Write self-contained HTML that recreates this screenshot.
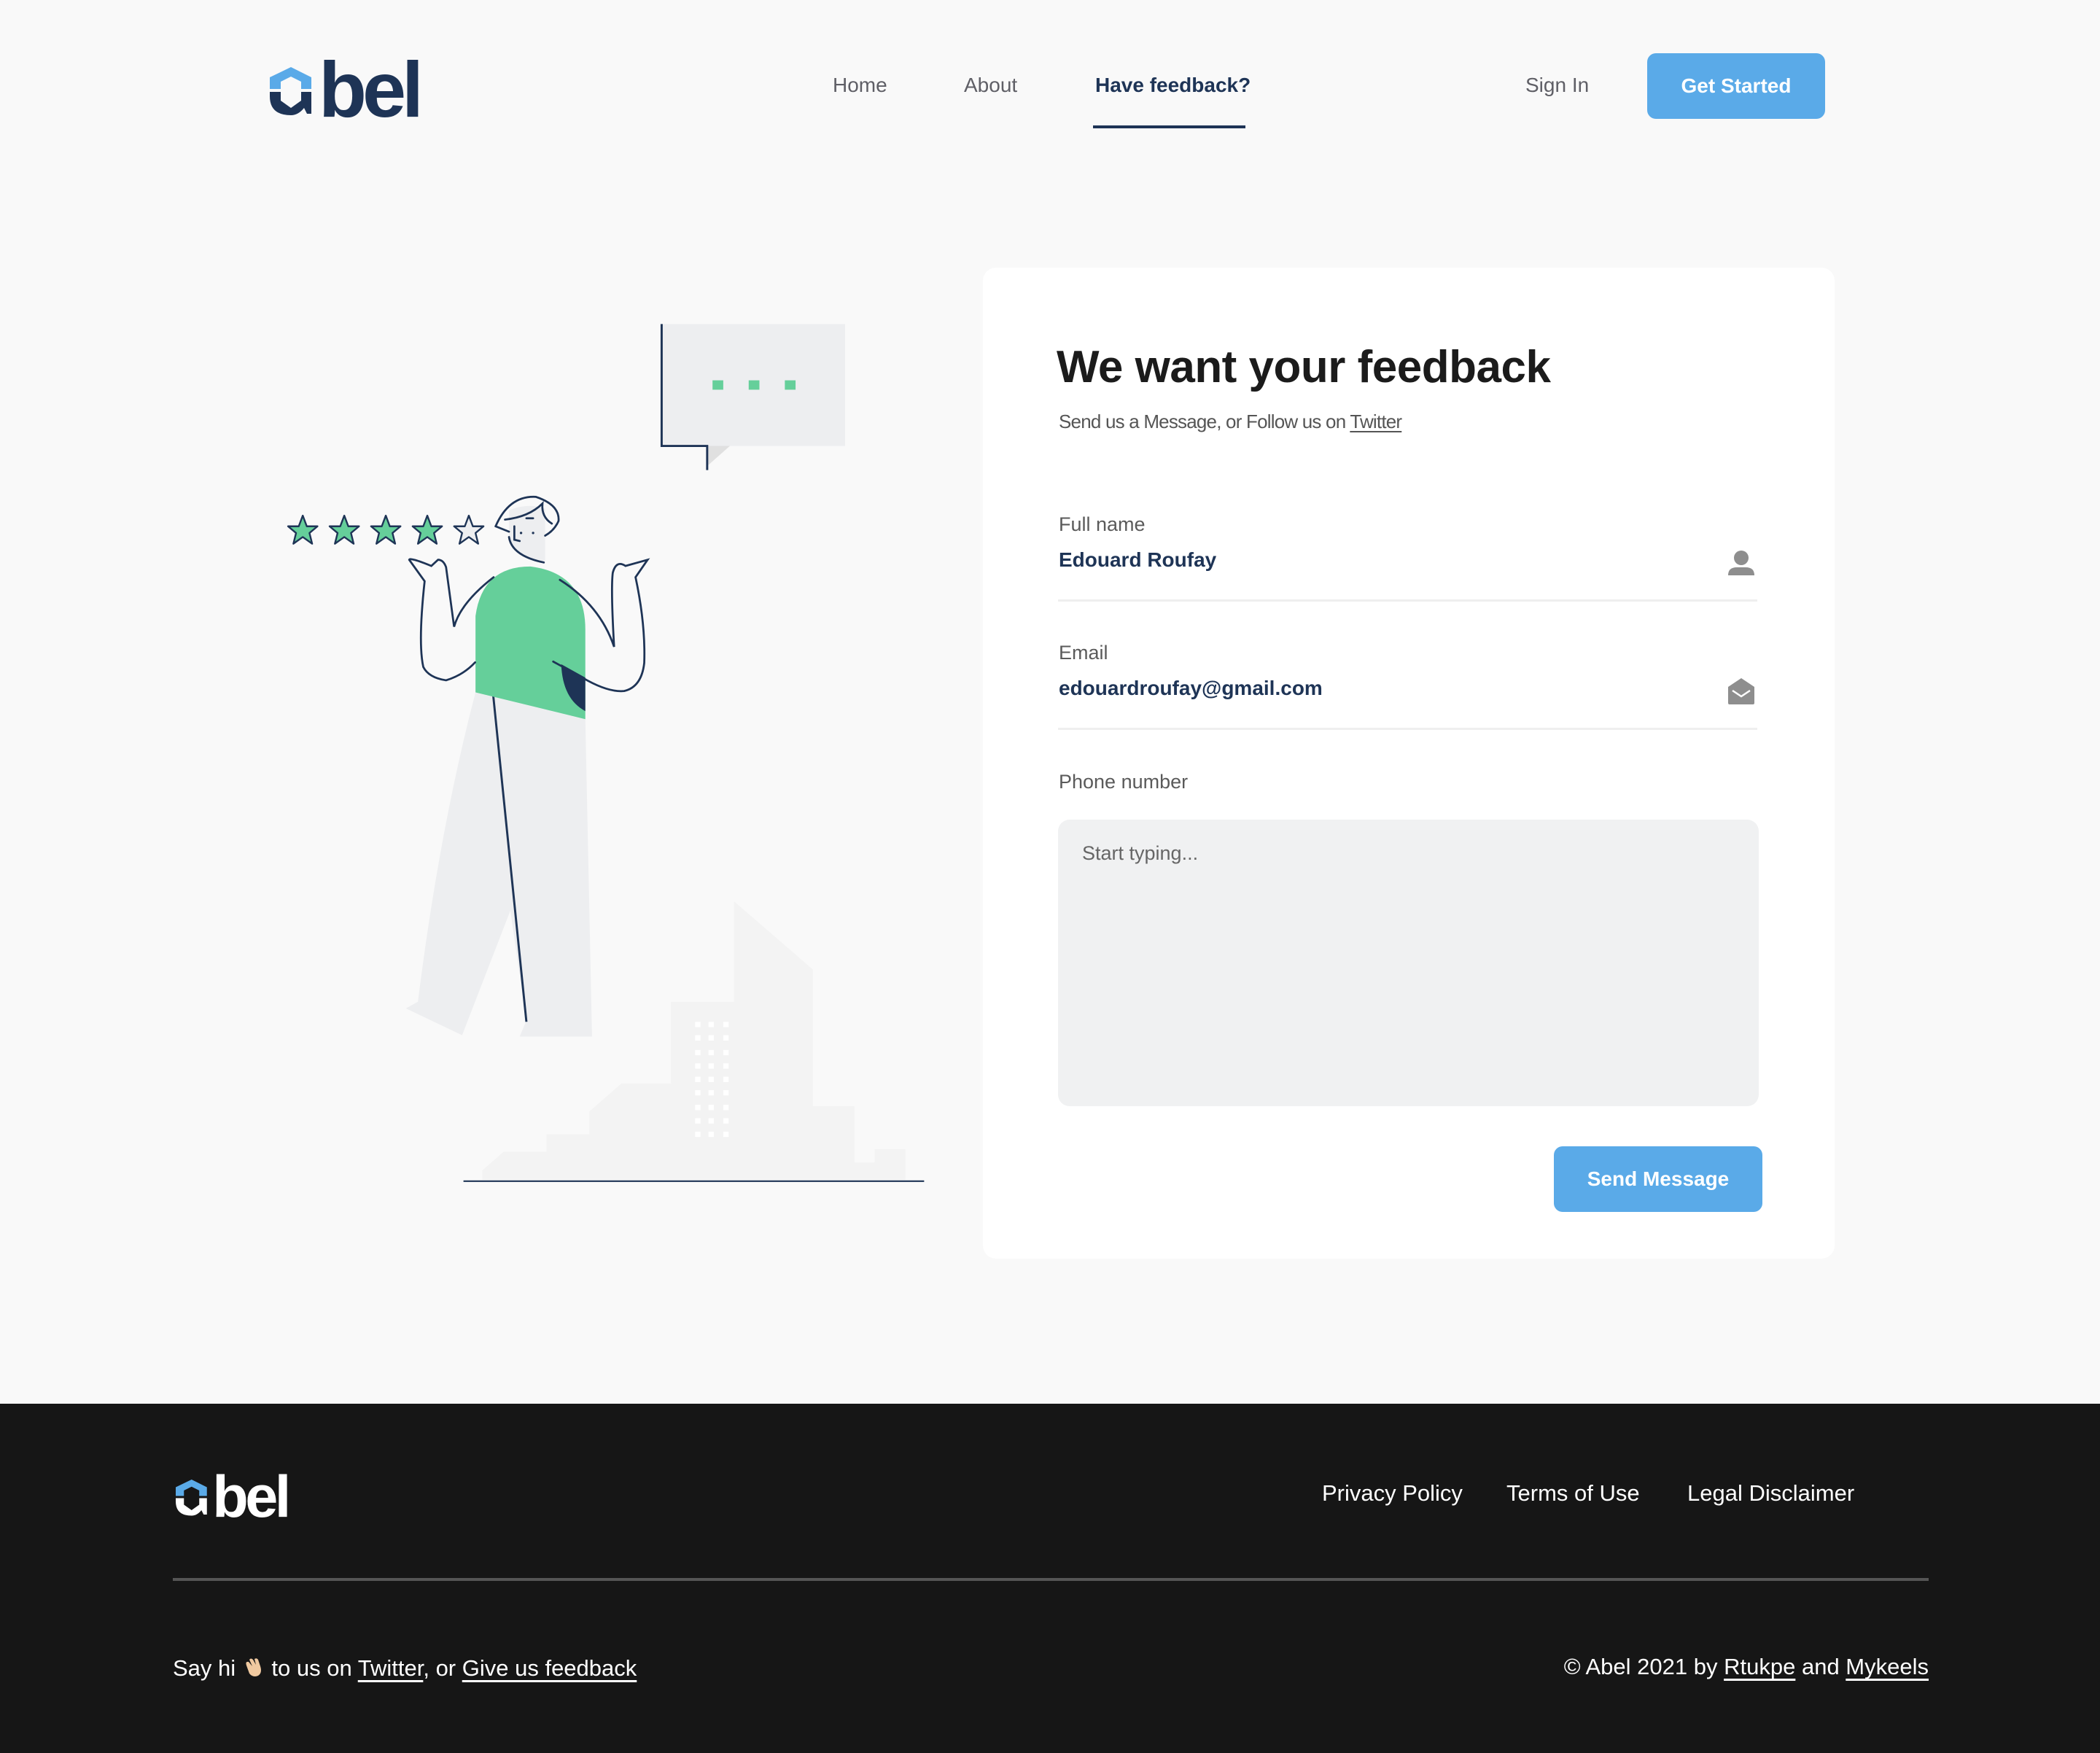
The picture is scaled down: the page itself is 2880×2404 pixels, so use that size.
<!DOCTYPE html>
<html><head><meta charset="utf-8"><style>
*{margin:0;padding:0;box-sizing:border-box}
body{width:2880px;height:2404px;background:#f9f9f9;font-family:"Liberation Sans",Arial,sans-serif;position:relative;overflow:hidden}
.a{position:absolute;white-space:nowrap}
.nav{font-size:28px;color:#5f5f66;top:101px}
.card{position:absolute;left:1348px;top:367px;width:1168px;height:1359px;background:#fff;border-radius:18px}
.lbl{font-size:27px;color:#5a5a5a}
.val{font-size:28px;color:#1e3456;font-weight:bold}
.line{position:absolute;left:1451px;width:959px;height:3px;background:#efefef}
.btn{position:absolute;background:#5aaae8;color:#fff;font-weight:bold;font-size:28px;border-radius:12px;display:flex;align-items:center;justify-content:center}
footer{position:absolute;left:0;top:1925px;width:2880px;height:479px;background:#161616;color:#fff}
footer .l{font-size:31px;color:#fff;top:105px}
footer u{text-underline-offset:6px}
</style></head><body>

<!-- logo -->
<svg class="a" style="left:369px;top:76px" width="210" height="88" viewBox="0 0 210 88">
<path d="M1 30 L30 16 L58 30 V46 H44 V36 L30 29 L16 36 V46 H1 Z" fill="#5aaae8"/>
<path d="M1 50 H16 V62 L30 72 L44 62 V50 H58 V80 H52 L48 72 Q40 82 30 82 Q1 82 1 56 Z" fill="#1e3456"/>
<text x="68" y="84" font-family="Liberation Sans" font-weight="bold" font-size="108" fill="#1e3456" letter-spacing="-4" textLength="140">bel</text>
</svg>

<div class="a nav" style="left:1142px">Home</div>
<div class="a nav" style="left:1322px">About</div>
<div class="a nav" style="left:1502px;color:#1e3456;font-weight:bold">Have feedback?</div>
<div class="a" style="left:1499px;top:172px;width:209px;height:4px;background:#1e3456"></div>
<div class="a nav" style="left:2092px">Sign In</div>
<div class="btn" style="left:2259px;top:73px;width:244px;height:90px">Get Started</div>

<!-- illustration -->
<svg class="a" style="left:0;top:0" width="2880" height="2404" viewBox="0 0 1568 1309">
<polygon points="548,673 607,724 607,826 638,826 638,868 653,868 653,858 676,858 676,881 360,881 360,874 376,860 408,860 408,847 440,847 440,830 464,809 501,809 501,748 548,748" fill="#f3f3f3"/>
<line x1="346" y1="882" x2="690" y2="882" stroke="#1e3456" stroke-width="1.2"/>
<rect x="494" y="242" width="137" height="91" fill="#edeef0"/>
<polygon points="528,333 545,333 528,348" fill="#e0e0e0"/>
<path d="M494 242 V333 H528 V351" fill="none" stroke="#1e3456" stroke-width="1.6"/>
<rect x="532" y="284" width="8" height="7" fill="#65cf9a"/><rect x="559" y="284" width="8" height="7" fill="#65cf9a"/><rect x="586" y="284" width="8" height="7" fill="#65cf9a"/>
<g stroke="#1e3456" stroke-width="1.3" stroke-linejoin="round">
<path id="st" d="M226 385 L229 393 L237 393 L231 398 L233 406 L226 401 L219 406 L221 398 L215 393 L223 393 Z" fill="#65cf9a"/>
<use href="#st" x="31"/><use href="#st" x="62"/><use href="#st" x="93"/>
<path d="M350 385 L353 393 L361 393 L355 398 L357 406 L350 401 L343 406 L345 398 L339 393 L347 393 Z" fill="#edeef0"/>
</g>
<path d="M355 517 L437 537 L442 774 L388 774 L393 762 L381 680 L345 773 L303 753 L312 748 Q328 620 355 517 Z" fill="#edeef0"/>
<line x1="368" y1="517" x2="393" y2="763" stroke="#1e3456" stroke-width="1.6"/>
<path d="M355 517 V460 Q360 423 396 423 Q437 428 437 470 V537 Z" fill="#65cf9a"/>
<path d="M419 496 L437 506 V531 Q420 522 419 496 Z" fill="#1e3456"/>
<g fill="none" stroke="#1e3456" stroke-width="1.5" stroke-linecap="round">
<path d="M354.7 494.6 Q346 504 333 508 Q320 506 316 498 Q312 480 317 434 L305.5 418 Q306 416 322 422.6 L327 418 Q331 418 333 423.5 L339 468 Q344 450 368.5 431"/>
<path d="M418 433 Q448 452 458.5 483 Q456 440 457.5 427.7 Q460 418 467 422.6 L483.5 418 L474.5 431 Q482 466 481 495 Q479 513 466 516 Q455 517 438.7 508.2 L413 494"/>
</g>
<path d="M380 381 Q395 375 407 380 V419 Q385 418 380 400 Z" fill="#edeef0"/>
<g fill="none" stroke="#1e3456" stroke-width="1.5" stroke-linecap="round">
<path d="M380 401 Q382 415 406 420"/>
<path d="M370 393 Q380 370 400 371 Q418 377 417 389 Q414 396 407 400"/>
<path d="M370 393 L380 397 M377 388 Q395 386 405 376 Q404 386 412 391"/>
<path d="M384 393 V403 L388 404 M393 387 H398"/>
</g>
<circle cx="389" cy="398" r="0.9" fill="#1e3456"/><circle cx="398" cy="398" r="0.9" fill="#1e3456"/>
<g fill="#fff">
<rect x="519" y="763" width="4" height="4"/><rect x="529" y="763" width="4" height="4"/><rect x="540" y="763" width="4" height="4"/>
<rect x="519" y="773" width="4" height="4"/><rect x="529" y="773" width="4" height="4"/><rect x="540" y="773" width="4" height="4"/>
<rect x="519" y="784" width="4" height="4"/><rect x="529" y="784" width="4" height="4"/><rect x="540" y="784" width="4" height="4"/>
<rect x="519" y="794" width="4" height="4"/><rect x="529" y="794" width="4" height="4"/><rect x="540" y="794" width="4" height="4"/>
<rect x="519" y="804" width="4" height="4"/><rect x="529" y="804" width="4" height="4"/><rect x="540" y="804" width="4" height="4"/>
<rect x="519" y="814" width="4" height="4"/><rect x="529" y="814" width="4" height="4"/><rect x="540" y="814" width="4" height="4"/>
<rect x="519" y="825" width="4" height="4"/><rect x="529" y="825" width="4" height="4"/><rect x="540" y="825" width="4" height="4"/>
<rect x="519" y="835" width="4" height="4"/><rect x="529" y="835" width="4" height="4"/><rect x="540" y="835" width="4" height="4"/>
<rect x="519" y="845" width="4" height="4"/><rect x="529" y="845" width="4" height="4"/><rect x="540" y="845" width="4" height="4"/>
</g>
</svg>

<div class="card"></div>
<div class="a" style="left:1449px;top:468px;font-size:62px;font-weight:bold;color:#1b1b1b;letter-spacing:-0.5px">We want your feedback</div>
<div class="a" style="left:1452px;top:563px;font-size:26px;color:#555;letter-spacing:-0.8px">Send us a Message, or Follow us on <u style="text-underline-offset:4px">Twitter</u></div>

<div class="a lbl" style="left:1452px;top:704px">Full name</div>
<div class="a val" style="left:1452px;top:752px">Edouard Roufay</div>
<svg class="a" style="left:2368px;top:753px" width="40" height="40" viewBox="0 0 40 40"><circle cx="20" cy="12" r="10" fill="#8e8e8e"/><path d="M2 36 Q2 25 14 25 H26 Q38 25 38 36 Z" fill="#8e8e8e"/></svg>
<div class="line" style="top:822px"></div>

<div class="a lbl" style="left:1452px;top:880px">Email</div>
<div class="a val" style="left:1452px;top:928px">edouardroufay@gmail.com</div>
<svg class="a" style="left:2368px;top:928px" width="40" height="40" viewBox="0 0 40 40"><path d="M2 14 L20 2 L38 14 V36 Q38 38 36 38 H4 Q2 38 2 36 Z" fill="#8e8e8e"/><path d="M8 19 L20 27 L32 19" fill="none" stroke="#fff" stroke-width="2.5"/></svg>
<div class="line" style="top:998px"></div>

<div class="a lbl" style="left:1452px;top:1057px">Phone number</div>
<div class="a" style="left:1451px;top:1124px;width:961px;height:393px;background:#f0f1f2;border-radius:16px"></div>
<div class="a" style="left:1484px;top:1155px;font-size:27px;color:#666">Start typing...</div>
<div class="btn" style="left:2131px;top:1572px;width:286px;height:90px">Send Message</div>

<footer>
<svg class="a" style="left:239px;top:92px" width="160" height="66" viewBox="0 0 210 88">
<path d="M1 30 L30 16 L58 30 V46 H44 V36 L30 29 L16 36 V46 H1 Z" fill="#5aaae8"/>
<path d="M1 50 H16 V62 L30 72 L44 62 V50 H58 V80 H52 L48 72 Q40 82 30 82 Q1 82 1 56 Z" fill="#fff"/>
<text x="68" y="84" font-family="Liberation Sans" font-weight="bold" font-size="108" fill="#fff" letter-spacing="-4" textLength="140">bel</text>
</svg>
<div class="a l" style="left:1813px">Privacy Policy</div>
<div class="a l" style="left:2066px">Terms of Use</div>
<div class="a l" style="left:2314px">Legal Disclaimer</div>
<div class="a" style="left:237px;top:239px;width:2408px;height:4px;background:#555"></div>
<div class="a" style="left:237px;top:345px;font-size:31px">Say hi <svg width="32" height="32" viewBox="0 0 32 32" style="vertical-align:-4px"><path d="M6 14 Q4 8 9 9 L14 15 L10 6 Q12 3 15 6 L19 13 L17 5 Q20 3 22 6 L25 15 Q28 24 22 28 Q15 31 10 25 Z" fill="#f0c9a0"/></svg> to us on <u>Twitter</u>, or <u>Give us feedback</u></div>
<div class="a" style="right:235px;top:343px;font-size:31px">© Abel 2021 by <u>Rtukpe</u> and <u>Mykeels</u></div>
</footer>
</body></html>
